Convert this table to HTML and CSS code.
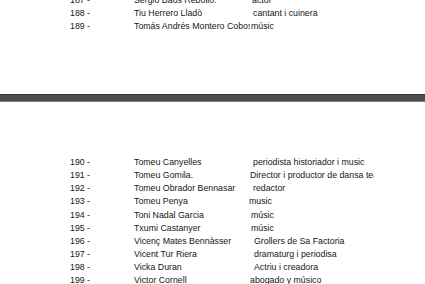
FILE: index.html
```html
<!DOCTYPE html>
<html>
<head>
<meta charset="utf-8">
<link rel="stylesheet" href="styles.css">
</head>
<body>
<div class="page page-top">
  <div class="list list-top">
    <div class="row"><span class="num">187 -</span><span class="name">Sergio Baos Rebollo.</span><span class="desc o2">actor</span></div>
    <div class="row"><span class="num">188 -</span><span class="name">Tiu Herrero Lladò</span><span class="desc o3">cantant i cuinera</span></div>
    <div class="row"><span class="num">189 -</span><span class="name">Tomás Andrés Montero Cobos</span><span class="desc o1">músic</span></div>
  </div>
</div>
<div class="bar"></div>
<div class="page page-bottom">
  <div class="list">
    <div class="row"><span class="num">190 -</span><span class="name">Tomeu Canyelles</span><span class="desc o3">periodista historiador i music</span></div>
    <div class="row"><span class="num">191 -</span><span class="name">Tomeu Gomila.</span><span class="desc o0">Director i productor de dansa teatre</span></div>
    <div class="row"><span class="num">192 -</span><span class="name">Tomeu Obrador Bennasar</span><span class="desc o3">redactor</span></div>
    <div class="row"><span class="num">193 -</span><span class="name">Tomeu Penya</span><span class="desc o-1">music</span></div>
    <div class="row"><span class="num">194 -</span><span class="name">Toni Nadal Garcia</span><span class="desc o1">músic</span></div>
    <div class="row"><span class="num">195 -</span><span class="name">Txumi Castanyer</span><span class="desc o1">músic</span></div>
    <div class="row"><span class="num">196 -</span><span class="name">Vicenç Mates Bennàsser</span><span class="desc o4">Grollers de Sa Factoria</span></div>
    <div class="row"><span class="num">197 -</span><span class="name">Vicent Tur Riera</span><span class="desc o4">dramaturg i periodisa</span></div>
    <div class="row"><span class="num">198 -</span><span class="name">Vicka Duran</span><span class="desc o4">Actriu i creadora</span></div>
    <div class="row"><span class="num">199 -</span><span class="name">Victor Cornell</span><span class="desc o0">abogado y músico</span></div>
  </div>
</div>
</body>
</html>
```

FILE: styles.css
```css
html, body {
  margin: 0;
  padding: 0;
  background: #ffffff;
}
body {
  width: 425px;
  height: 284px;
  overflow: hidden;
  font-family: "Liberation Sans", Arial, sans-serif;
  font-size: 8.8px;
  color: #161616;
}
.page {
  background: #ffffff;
}
.page-top {
  height: 94px;
  overflow: hidden;
}
.list-top {
  margin-top: -6px;
}
.page-bottom {
  padding-top: 54.2px;
}
.row {
  display: flex;
  height: 13.1px;
  line-height: 13.1px;
  white-space: nowrap;
}
.num {
  padding-left: 70px;
  width: 64px;
  flex: none;
}
.name {
  width: 116px;
  flex: none;
  overflow: hidden;
}
.desc {
  width: 124px;
  flex: none;
  overflow: hidden;
  box-sizing: border-box;
}
.o-1 { padding-left: 0; margin-left: -1px; }
.o0 { padding-left: 0; }
.o1 { padding-left: 1px; }
.o2 { padding-left: 2px; }
.o3 { padding-left: 3px; }
.o4 { padding-left: 4px; }
.bar {
  height: 6px;
  background: #4a4d51;
  border-top: 1px solid #353535;
  border-bottom: 1px solid #7c7c7c;
}
```
